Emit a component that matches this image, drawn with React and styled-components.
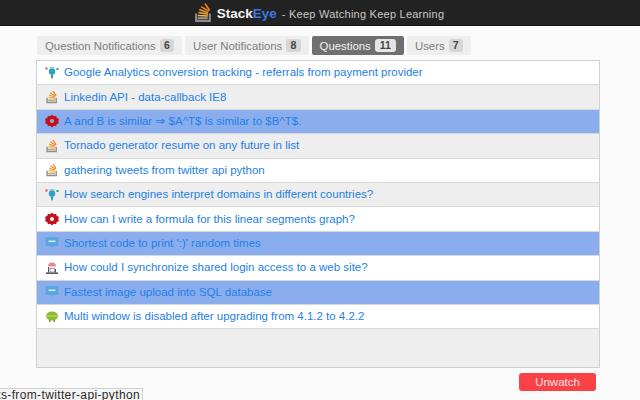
import React from "react";
import styled, { createGlobalStyle } from "styled-components";

const Global = createGlobalStyle`
  html, body { margin: 0; padding: 0; height: 400px; overflow: hidden; background: #fafafa; font-family: "Liberation Sans", Arial, sans-serif; }
`;
const Page = styled.div`width: 640px; height: 400px; position: relative; overflow: hidden; display: flex; flex-direction: column;`;
const Header = styled.header`
  height: 26px; background: #222222; display: flex; align-items: center; justify-content: center;
  box-sizing: border-box; border-bottom: 1px solid #111; padding: 2px 3px 0 0; gap: 3px;
`;
const Logo = styled.span`display: flex; margin-top: -2px;`;
const Brand = styled.span`font-size: 13.5px; font-weight: 700; color: #f4f4f4;`;
const BrandBlue = styled.span`color: #3b78e7;`;
const Tagline = styled.span`font-size: 11px; color: #c9c9c9; letter-spacing: .24px; margin-left: 2px;`;
const Main = styled.main`padding: 10px 40px 0 36px; display: flex; flex-direction: column;`;
const Tabs = styled.nav`display: flex; gap: 3px; height: 19px; margin-bottom: 5px; padding-left: 1px;`;
const Tab = styled.div`
  display: flex; align-items: center; gap: 4px; padding: 0 8px; font-size: 11.4px; border-radius: 2px;
  background: ${p => p.$active ? "#6f6f6f" : "#eeeeee"};
  color: ${p => p.$active ? "#f2f2f2" : "#7d7d7d"};
`;
const Badge = styled.span`
  font-size: 10.5px; font-weight: 700; line-height: 13px; padding: 0 ${p => p.$active ? "5px" : "4.200px"}; border-radius: 3px;
  background: ${p => p.$active ? "#e4e4e4" : "#d6d6d6"}; color: #444;
`;
const List = styled.div`
  height: 308px; box-sizing: border-box; border: 1px solid #d0d0d0; background: #eeeeee; display: flex; flex-direction: column;
`;
const Row = styled.div`
  height: 24.4px; box-sizing: border-box; display: flex; align-items: center; padding-left: 8px; gap: 5px;
  border-bottom: 1px solid #d8d8d8;
  background: ${p => ({ w: "#ffffff", g: "#eeeeee", b: "#8aaeed" }[p.$t])};
`;
const Title = styled.a`font-size: 11.5px; color: #2480e6; white-space: nowrap; margin-top: -1px;`;
const Footer = styled.div`display: flex; justify-content: flex-end; margin-top: 5px; padding-right: 4px;`;
const Unwatch = styled.button`
  width: 77px; height: 18px; border: 0; border-radius: 3px; background: #fb4148; color: #f8e0e0;
  font: 11.5px "Liberation Sans", Arial, sans-serif; padding: 0;
`;
const Status = styled.div`
  position: absolute; right: 497px; bottom: 0; line-height: 12px; white-space: nowrap; box-sizing: border-box;
  padding: 0 2px 0 0; height: 12px; font-size: 12px; color: #2a2a2a; background: #f5f5f5; border: 1px solid #cfcfcf; border-bottom: 0; border-left: 0; letter-spacing: .36px;
`;

const StackLogo = ({ s = 16 }) => (
  <svg width={s} height={s} viewBox="0 0 20 20">
    <path d="M2 11v8h15v-8h-2v6H4v-6z" fill="#8d8d8d" />
    <path d="M4.500 14.500h9.500v1.800H4.500z" fill="#a89878" />
    <path d="M4.800 12.100l9.300.5v1.500l-9.400-.5z" fill="#e6bb63" />
    <path d="M5.300 9.400l9.200 1.600-.3 1.500-9.200-1.700z" fill="#eda83c" />
    <path d="M6.300 6.500l8.200 3-.6 1.500-8.200-3.100z" fill="#f19326" />
    <path d="M8.200 3.700l7.400 4.600-.9 1.300-7.300-4.700z" fill="#f48024" />
    <path d="M12 1l4.500 6.500-1.300 1-4.500-6.500z" fill="#f48024" />
  </svg>
);
const WebIcon = () => (
  <svg width="14" height="14" viewBox="0 0 14 14">
    <circle cx="7" cy="5.500" r="3.200" fill="#2c9fc9" />
    <path d="M5.800 8.500h2.400l-.5 4h-1.400z" fill="#2f9f8f" />
    <rect x="0.500" y="1.500" width="2" height="2" fill="#e8403a" />
    <rect x="11.500" y="2" width="2" height="2" fill="#29a36a" />
    <rect x="4.500" y="1" width="5" height="1.300" fill="#8bc9e6" />
  </svg>
);
const MathIcon = () => (
  <svg width="14" height="14" viewBox="0 0 14 14">
    <path fill="#c1121c" fillRule="evenodd" d="M7 .6l1.800 1.600 2.300-.4.700 2.200 2.100.8-.5 2.200.5 2.200-2.100.8-.7 2.200-2.300-.4L7 13.400l-1.800-1.600-2.300.4-.7-2.200-2.100-.8.500-2.200-.5-2.200 2.100-.8.700-2.200 2.300.4zM7 5a2 2 0 100 4 2 2 0 000-4z" />
  </svg>
);
const BubbleIcon = () => (
  <svg width="14" height="14" viewBox="0 0 14 14">
    <path d="M2 1h10a1.500 1.500 0 011.500 1.500v6A1.500 1.500 0 0112 10H8.500L7 12 5.500 10H2A1.500 1.500 0 01.500 8.500v-6A1.500 1.500 0 012 1z" fill="#5aa6dd" />
    <rect x="3.500" y="4.500" width="7" height="1.600" fill="#cfe6f5" />
  </svg>
);
const WebmasterIcon = () => (
  <svg width="14" height="14" viewBox="0 0 14 14">
    <path d="M3 5.500a4 4 0 018 0z" fill="#e58a8a" />
    <path d="M3.500 6v5.500M10.500 8v3.500" stroke="#555" strokeWidth="1" />
    <rect x="1" y="11.500" width="12" height="1.300" fill="#333" />
    <rect x="5" y="7.500" width="4.500" height="3.500" fill="#fff" stroke="#777" strokeWidth=".7" />
  </svg>
);
const AndroidIcon = () => (
  <svg width="14" height="14" viewBox="0 0 14 14">
    <ellipse cx="7" cy="6" rx="6" ry="4.500" fill="#8dbb2f" />
    <path d="M1.500 6h11" stroke="#bcdc70" strokeWidth="1.200" />
    <rect x="4" y="10" width="1.500" height="2" fill="#6d9520" />
    <rect x="8.500" y="10" width="1.500" height="2" fill="#6d9520" />
  </svg>
);

const rows = [
  ["w", <WebIcon />, "Google Analytics conversion tracking - referrals from payment provider"],
  ["g", <StackLogo s={14} />, "Linkedin API - data-callback IE8"],
  ["b", <MathIcon />, "A and B is similar ⇒ $A^T$ is similar to $B^T$."],
  ["g", <StackLogo s={14} />, "Tornado generator resume on any future in list"],
  ["w", <StackLogo s={14} />, "gathering tweets from twitter api python"],
  ["g", <WebIcon />, "How search engines interpret domains in different countries?"],
  ["w", <MathIcon />, "How can I write a formula for this linear segments graph?"],
  ["b", <BubbleIcon />, "Shortest code to print ':)' random times"],
  ["w", <WebmasterIcon />, "How could I synchronize shared login access to a web site?"],
  ["b", <BubbleIcon />, "Fastest image upload into SQL database"],
  ["w", <AndroidIcon />, "Multi window is disabled after upgrading from 4.1.2 to 4.2.2"],
];
const tabs = [["Question Notifications", 6], ["User Notifications", 8], ["Questions", 11, true], ["Users", 7]];

export default function App() {
  return (
    <Page>
      <Global />
      <Header>
        <Logo><StackLogo s={21} /></Logo>
        <Brand>Stack<BrandBlue>Eye</BrandBlue></Brand>
        <Tagline>- Keep Watching Keep Learning</Tagline>
      </Header>
      <Main>
        <Tabs>
          {tabs.map(([n, c, a]) => <Tab key={n} $active={a}>{n}<Badge $active={a}>{c}</Badge></Tab>)}
        </Tabs>
        <List>
          {rows.map(([t, icon, title]) => <Row key={title} $t={t}>{icon}<Title>{title}</Title></Row>)}
        </List>
        <Footer><Unwatch>Unwatch</Unwatch></Footer>
      </Main>
      <Status>ts-from-twitter-api-python</Status>
    </Page>
  );
}
